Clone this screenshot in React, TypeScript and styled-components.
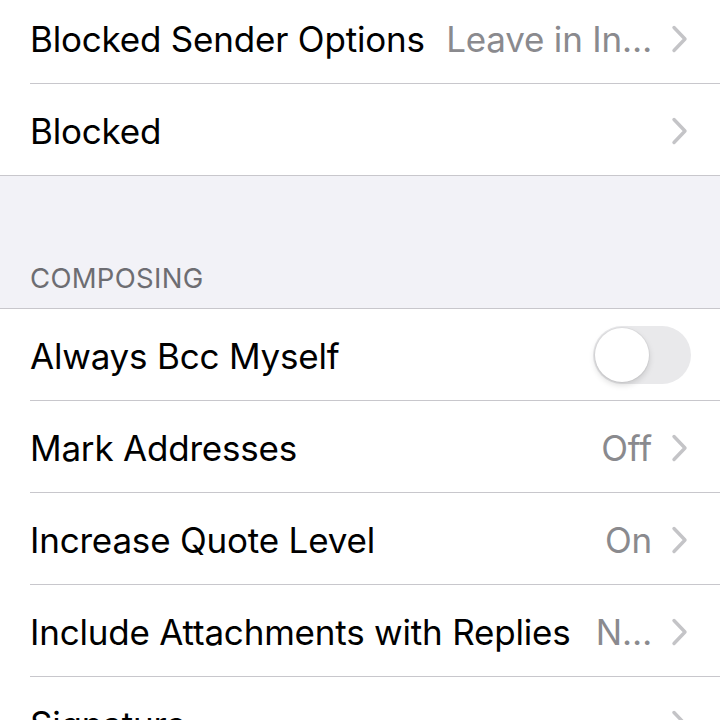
import React from "react"
import styled, { createGlobalStyle } from "styled-components"

const GlobalStyle = createGlobalStyle`
  html, body {
    margin: 0;
    padding: 0;
    background: #ffffff;
    overflow: hidden;
  }
  body {
    font-family: Inter, "Noto Sans", "Liberation Sans", sans-serif;
    -webkit-font-smoothing: antialiased;
  }
`

const Screen = styled.div`
  width: 720px;
  height: 720px;
  overflow: hidden;
  background: #ffffff;
`

const List = styled.div`
  margin-top: -8px;
  display: flex;
  flex-direction: column;
`

const Group = styled.div`
  background: #ffffff;
`

const Row = styled.div<{ $last?: boolean }>`
  display: flex;
  align-items: center;
  height: 92px;
  padding-left: 30px;
  box-sizing: border-box;
  border-bottom: ${(p) => (p.$last ? "1px solid #c8c7cc" : "none")};
`

const RowInner = styled.div<{ $last?: boolean }>`
  flex: 1;
  height: 100%;
  display: flex;
  align-items: center;
  padding-right: 32px;
  padding-top: 2px;
  border-bottom: ${(p) => (p.$last ? "none" : "1px solid #c8c7cc")};
  box-sizing: border-box;
`

const Label = styled.span`
  flex: 1;
  font-size: 35px;
  color: #000000;
  letter-spacing: -0.2px;
  white-space: nowrap;
`

const Value = styled.span`
  font-size: 35px;
  color: #8a8a8e;
  letter-spacing: -0.2px;
  margin-right: 19px;
  white-space: nowrap;
`

const SectionGap = styled.div`
  background: #f2f2f7;
  height: 133px;
  display: flex;
  align-items: flex-end;
  padding: 0 30px 13px;
  box-sizing: border-box;
  border-bottom: 1px solid #c8c7cc;
`

const SectionTitle = styled.span`
  font-size: 27.5px;
  color: #6d6d72;
  letter-spacing: 0.3px;
`

const Switch = styled.div<{ $on?: boolean }>`
  width: 98px;
  height: 58px;
  border-radius: 29px;
  background: ${(p) => (p.$on ? "#34c759" : "#e9e9eb")};
  position: relative;
  flex-shrink: 0;
  margin-right: -3px;
  margin-top: -2px;
`

const Knob = styled.div`
  position: absolute;
  top: 2px;
  left: 2px;
  width: 54px;
  height: 54px;
  border-radius: 50%;
  background: #ffffff;
  box-shadow: 0 3px 6px rgba(0, 0, 0, 0.15), 0 0 0 1px rgba(0, 0, 0, 0.04);
`

const Chevron = () => (
  <svg width="17" height="28" viewBox="0 0 17 28" style={{ flexShrink: 0 }}>
    <path
      d="M3 2.5 L14 14 L3 25.5"
      fill="none"
      stroke="#c4c4c7"
      strokeWidth="3.4"
      strokeLinecap="round"
      strokeLinejoin="round"
    />
  </svg>
)

type Item = { label: string; value?: string; toggle?: boolean }

const blocked: Item[] = [
  { label: "Blocked Sender Options", value: "Leave in In…" },
  { label: "Blocked" },
]

const composing: Item[] = [
  { label: "Always Bcc Myself", toggle: true },
  { label: "Mark Addresses", value: "Off" },
  { label: "Increase Quote Level", value: "On" },
  { label: "Include Attachments with Replies", value: "N…" },
  { label: "Signature" },
]

function SettingsRow({ item, last }: { item: Item; last: boolean }) {
  return (
    <Row $last={last}>
      <RowInner $last={last}>
        <Label>{item.label}</Label>
        {item.value && <Value>{item.value}</Value>}
        {item.toggle ? (
          <Switch>
            <Knob />
          </Switch>
        ) : (
          <Chevron />
        )}
      </RowInner>
    </Row>
  )
}

export default function App() {
  return (
    <Screen>
      <GlobalStyle />
      <List>
        <Group>
          {blocked.map((it, i) => (
            <SettingsRow key={it.label} item={it} last={i === blocked.length - 1} />
          ))}
        </Group>
        <SectionGap>
          <SectionTitle>COMPOSING</SectionTitle>
        </SectionGap>
        <Group>
          {composing.map((it, i) => (
            <SettingsRow key={it.label} item={it} last={i === composing.length - 1} />
          ))}
        </Group>
      </List>
    </Screen>
  )
}
